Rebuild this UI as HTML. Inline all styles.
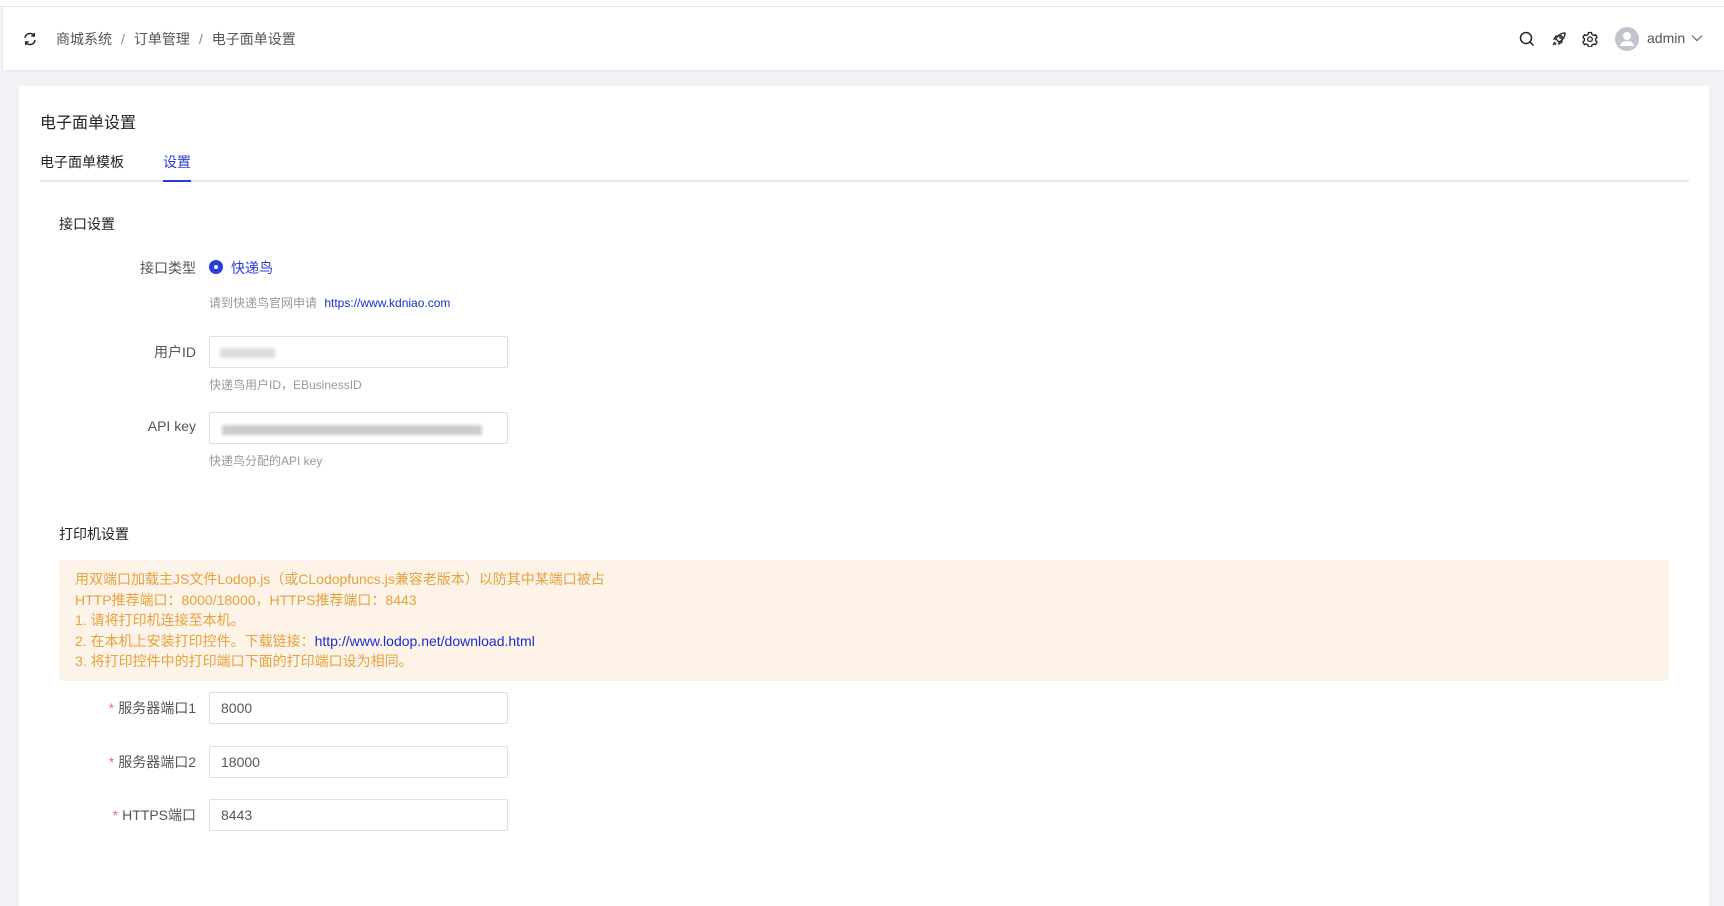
<!DOCTYPE html>
<html><head><meta charset="utf-8"><style>
*{box-sizing:border-box;margin:0;padding:0}
body{width:1724px;height:892px;overflow:hidden;background:#f0f2f5;font-family:"Liberation Sans","Noto Sans CJK SC",sans-serif;color:#333;position:relative}
.abs{position:absolute}
.top{left:0;top:0;width:1724px;height:7px;background:#fff;border-bottom:1px solid #e4e6ea}
.hdr{left:3px;top:7px;width:1721px;height:63px;background:#fff;box-shadow:0 1px 3px rgba(0,0,0,.05)}
.bc{left:56px;top:30px;font-size:14px;color:#555;line-height:18px;white-space:nowrap}
.bc span.s{color:#888;margin:0 9px}
.card{left:19px;top:86px;width:1690px;height:820px;background:#fff}
.t{font-size:16px;color:#222;white-space:nowrap}
.lbl{font-size:14px;color:#555;text-align:right;width:160px;left:36px;white-space:nowrap}
.help{font-size:12px;color:#999;left:209px;white-space:nowrap}
.inp{left:209px;width:299px;height:32px;border:1px solid #dcdfe6;border-radius:2px;font-size:14px;color:#555;padding-left:11px;line-height:30px}
.req{color:#f56c6c;margin-right:4px}
.alert{left:59px;top:560px;width:1610px;height:121px;background:#fdf3e8;border-radius:4px;padding:9px 16px;color:#e6a23c;font-size:14px;line-height:20.5px}
.blur{position:absolute;height:10px;background:#ddd;filter:blur(1.5px)}
</style></head><body>
<div class="abs top"></div>
<div class="abs hdr"></div>
<svg class="abs" style="left:23px;top:32px" width="14" height="14" viewBox="0 0 14 14" fill="none" stroke="#222" stroke-width="1.4"><path d="M2 6a5 5 0 0 1 9-2.5M12 8a5 5 0 0 1-9 2.5"/><path d="M11.3 1v3h-3M2.7 13v-3h3"/></svg>
<div class="abs bc">商城系统<span class="s">/</span>订单管理<span class="s">/</span>电子面单设置</div>
<svg class="abs" style="left:1519px;top:31px" width="16" height="16" viewBox="0 0 16 16" fill="none" stroke="#222" stroke-width="1.5"><circle cx="7" cy="7" r="5.5"/><path d="M11 11l3.5 3.5"/></svg>
<svg class="abs" style="left:1551px;top:31px" width="16" height="16" viewBox="0 0 16 16" fill="none" stroke="#222" stroke-width="1.3"><path d="M14 2c-4 0-7 2-9 6l3 3c4-2 6-5 6-9z"/><circle cx="10" cy="6" r="1.2"/><path d="M5 8H3l2-3h3M8 11v2l3-2V8M4 11l-2 3M5 12l-1 2"/></svg>
<svg class="abs" style="left:1582px;top:31px" width="16" height="16" viewBox="0 0 16 16" fill="none" stroke="#222" stroke-width="1.3"><path d="M6.5 1.5h3l.5 2 1.6.9 2-.6 1.5 2.6-1.5 1.4v1.8l1.5 1.4-1.5 2.6-2-.6-1.6.9-.5 2h-3l-.5-2-1.6-.9-2 .6L.9 11l1.5-1.4V7.8L.9 6.4 2.4 3.8l2 .6L6 3.5z"/><circle cx="8" cy="8.2" r="2.3"/></svg>
<svg class="abs" style="left:1615px;top:27px" width="24" height="24" viewBox="0 0 24 24"><circle cx="12" cy="12" r="12" fill="#c0c4cc"/><circle cx="12" cy="9" r="4" fill="#fff"/><path d="M5 19c1-4 4-5 7-5s6 1 7 5z" fill="#fff"/></svg>
<div class="abs" style="left:1647px;top:30px;font-size:14px;color:#555">admin</div>
<svg class="abs" style="left:1691px;top:34px" width="12" height="8" viewBox="0 0 12 8" fill="none" stroke="#666" stroke-width="1.2"><path d="M1 1.5l5 5 5-5"/></svg>

<div class="abs card"></div>
<div class="abs t" style="left:40px;top:109px">电子面单设置</div>
<div class="abs" style="left:40px;top:152px;font-size:14px;color:#222">电子面单模板</div>
<div class="abs" style="left:163px;top:152px;font-size:14px;color:#2b3dd8">设置</div>
<div class="abs" style="left:40px;top:180px;width:1649px;height:2px;background:#e4e7ed"></div>
<div class="abs" style="left:163px;top:180px;width:28px;height:2px;background:#2b3dd8"></div>

<div class="abs" style="left:59px;top:214px;font-size:14px;color:#222">接口设置</div>
<div class="abs lbl" style="top:258px">接口类型</div>
<div class="abs" style="left:209px;top:260px;width:14px;height:14px;border-radius:50%;background:#2b3dd8"><div style="width:4px;height:4px;background:#fff;border-radius:50%;margin:5px"></div></div>
<div class="abs" style="left:231px;top:258px;font-size:14px;color:#2b3dd8">快递鸟</div>
<div class="abs help" style="top:294px">请到快递鸟官网申请 <span style="color:#1a2fd0;margin-left:4px">https://www.kdniao.com</span></div>
<div class="abs lbl" style="top:342px">用户ID</div>
<div class="abs inp" style="top:336px"><div class="blur" style="left:10px;top:11px;width:55px"></div></div>
<div class="abs help" style="top:376px">快递鸟用户ID，EBusinessID</div>
<div class="abs lbl" style="top:418px">API key</div>
<div class="abs inp" style="top:412px"><div class="blur" style="left:12px;top:12px;width:260px;background:#ccc"></div></div>
<div class="abs help" style="top:452px">快递鸟分配的API key</div>

<div class="abs" style="left:59px;top:524px;font-size:14px;color:#222">打印机设置</div>
<div class="abs alert">用双端口加载主JS文件Lodop.js（或CLodopfuncs.js兼容老版本）以防其中某端口被占<br>HTTP推荐端口：8000/18000，HTTPS推荐端口：8443<br>1. 请将打印机连接至本机。<br>2. 在本机上安装打印控件。下载链接：<span style="color:#1a2fd0">http://www.lodop.net/download.html</span><br>3. 将打印控件中的打印端口下面的打印端口设为相同。</div>

<div class="abs lbl" style="top:698px"><span class="req">*</span>服务器端口1</div>
<div class="abs inp" style="top:692px">8000</div>
<div class="abs lbl" style="top:752px"><span class="req">*</span>服务器端口2</div>
<div class="abs inp" style="top:746px">18000</div>
<div class="abs lbl" style="top:805px"><span class="req">*</span>HTTPS端口</div>
<div class="abs inp" style="top:799px">8443</div>
</body></html>
